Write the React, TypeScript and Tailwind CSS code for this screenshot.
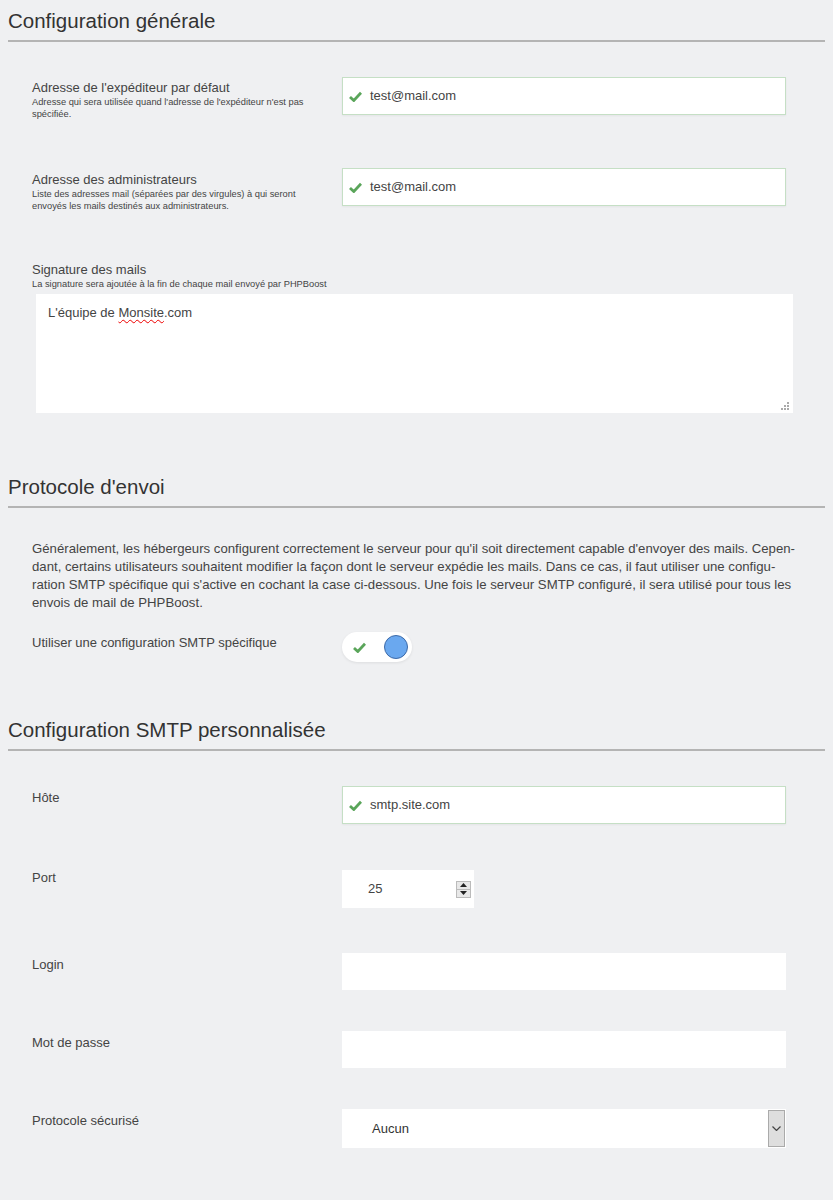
import React from "react";

const Check = () => (
  <svg width="13" height="11" viewBox="0 0 13 11" className="shrink-0">
    <path d="M1 6 L4.8 9.5 L12 1.8" fill="none" stroke="#5aa55a" strokeWidth="2.8" strokeLinejoin="miter" />
  </svg>
);

const H = ({ children }: { children: React.ReactNode }) => (
  <div className="mx-2 border-b-2 border-[#b4b4b4] pb-[6px]">
    <h2 className="text-[20.5px] leading-[26px] text-[#333]">{children}</h2>
  </div>
);

const Label = ({ title, desc }: { title: string; desc?: React.ReactNode }) => (
  <div className="w-[310px] shrink-0">
    <div className="text-[13px] leading-[15px] text-[#444]">{title}</div>
    {desc && <div className="text-[9.3px] leading-[12px] text-[#444] mt-[1px]">{desc}</div>}
  </div>
);

const ValidInput = ({ value }: { value: string }) => (
  <div className="flex h-[38px] w-[444px] items-center gap-[8px] border border-[#c5dfc5] bg-white pl-[6px] shadow-[0_1px_2px_rgba(0,0,0,0.05)]">
    <Check />
    <span className="text-[13px] text-[#444]">{value}</span>
  </div>
);

export default function App() {
  return (
    <div
      className="min-h-[1200px] w-[833px] bg-[#eff0f2] pt-[8px] text-[#444]"
      style={{ fontFamily: '"Liberation Sans", Arial, sans-serif' }}
    >
      <H>Configuration générale</H>

      <div className="mt-[35px] flex pl-[32px]">
        <div className="pt-[3px]">
          <Label
            title="Adresse de l'expéditeur par défaut"
            desc={<>Adresse qui sera utilisée quand l'adresse de l'expéditeur n'est pas<br />spécifiée.</>}
          />
        </div>
        <ValidInput value="test@mail.com" />
      </div>

      <div className="mt-[48px] flex pl-[32px]">
        <div className="pt-[4px]">
          <Label
            title="Adresse des administrateurs"
            desc={<>Liste des adresses mail (séparées par des virgules) à qui seront<br />envoyés les mails destinés aux administrateurs.</>}
          />
        </div>
        <ValidInput value="test@mail.com" />
      </div>

      <div className="mt-[50px] pl-[32px]">
        <Label title="Signature des mails" desc="La signature sera ajoutée à la fin de chaque mail envoyé par PHPBoost" />
        <div className="relative ml-[4px] mt-[4px] h-[119px] w-[757px] bg-white pl-[12px] pt-[9px] text-[13px] text-[#444]">
          L'équipe de{" "}
          <span className="underline decoration-wavy decoration-[#e00] decoration-[1px] underline-offset-2">Monsite</span>.com
          <svg width="8" height="8" viewBox="0 0 8 8" className="absolute bottom-[3px] right-[4px]">
            <rect x="6" y="0" width="2" height="2" fill="#aaa" />
            <rect x="3" y="3" width="2" height="2" fill="#aaa" />
            <rect x="6" y="3" width="2" height="2" fill="#aaa" />
            <rect x="0" y="6" width="2" height="2" fill="#aaa" />
            <rect x="3" y="6" width="2" height="2" fill="#aaa" />
            <rect x="6" y="6" width="2" height="2" fill="#aaa" />
          </svg>
        </div>
      </div>

      <div className="mt-[61px]">
        <H>Protocole d'envoi</H>
      </div>

      <p className="mt-[32px] whitespace-nowrap pl-[32px] text-[13.2px] leading-[18px] text-[#444]">
        Généralement, les hébergeurs configurent correctement le serveur pour qu'il soit directement capable d'envoyer des mails. Cepen-
        <br />
        dant, certains utilisateurs souhaitent modifier la façon dont le serveur expédie les mails. Dans ce cas, il faut utiliser une configu-
        <br />
        ration SMTP spécifique qui s'active en cochant la case ci-dessous. Une fois le serveur SMTP configuré, il sera utilisé pour tous les
        <br />
        envois de mail de PHPBoost.
      </p>

      <div className="mt-[20px] flex pl-[32px]">
        <div className="pt-[3px]">
          <Label title="Utiliser une configuration SMTP spécifique" />
        </div>
        <div className="flex h-[30px] w-[70px] items-center justify-between rounded-full bg-white pl-[11px] pr-[4px] shadow-[0_1px_3px_rgba(0,0,0,0.08)]">
          <Check />
          <div className="h-[24px] w-[24px] rounded-full border border-[#3d6aa8] bg-[#6aa8ef]" />
        </div>
      </div>

      <div className="mt-[55px]">
        <H>Configuration SMTP personnalisée</H>
      </div>

      <div className="mt-[35px] flex pl-[32px]">
        <div className="pt-[4px]">
          <Label title="Hôte" />
        </div>
        <ValidInput value="smtp.site.com" />
      </div>

      <div className="mt-[46px] flex pl-[32px]">
        <div>
          <Label title="Port" />
        </div>
        <div className="flex h-[38px] w-[132px] items-center justify-between bg-white pl-[26px] pr-[3px]">
          <span className="text-[13px] text-[#444]">25</span>
          <div className="flex h-[17px] w-[15px] flex-col border border-[#bbb] bg-[#e8e8e8]">
            <div className="flex flex-1 items-center justify-center border-b border-[#bbb]">
              <svg width="7" height="4" viewBox="0 0 7 4"><path d="M0 4 L3.5 0 L7 4Z" fill="#222" /></svg>
            </div>
            <div className="flex flex-1 items-center justify-center">
              <svg width="7" height="4" viewBox="0 0 7 4"><path d="M0 0 L3.5 4 L7 0Z" fill="#222" /></svg>
            </div>
          </div>
        </div>
      </div>

      <div className="mt-[45px] flex pl-[32px]">
        <div className="pt-[4px]">
          <Label title="Login" />
        </div>
        <div className="h-[37px] w-[444px] bg-white" />
      </div>

      <div className="mt-[41px] flex pl-[32px]">
        <div className="pt-[4px]">
          <Label title="Mot de passe" />
        </div>
        <div className="h-[37px] w-[444px] bg-white" />
      </div>

      <div className="mt-[41px] flex pl-[32px]">
        <div className="pt-[4px]">
          <Label title="Protocole sécurisé" />
        </div>
        <div className="flex h-[39px] w-[444px] items-center justify-between bg-white pl-[30px] pr-[1px]">
          <span className="text-[13px] text-[#333]">Aucun</span>
          <div className="flex h-[37px] w-[17px] items-center justify-center border border-[#aaa] bg-[#dedede]">
            <svg width="9" height="5" viewBox="0 0 9 5"><path d="M0.5 0.5 L4.5 4.5 L8.5 0.5" fill="none" stroke="#444" strokeWidth="1.2" /></svg>
          </div>
        </div>
      </div>
    </div>
  );
}
